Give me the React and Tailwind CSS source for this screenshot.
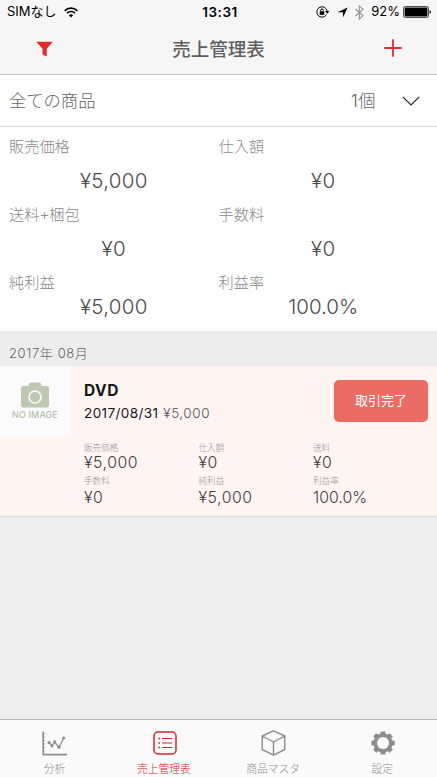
import React from "react";

function Wifi() {
  return (
    <svg width="14" height="11" viewBox="0 0 14 11" fill="none" stroke="#000" strokeWidth="1.7">
      <path d="M0.7 3.8a8.9 8.9 0 0 1 12.6 0" />
      <path d="M3 6.2a5.6 5.6 0 0 1 8 0" />
      <path d="M7 10.4 4.9 8.2a3 3 0 0 1 4.2 0Z" fill="#000" stroke="none" />
    </svg>
  );
}

function StatusBar() {
  return (
    <div className="grid h-6 grid-cols-[1fr_auto_1fr] items-center text-[13px] text-black">
      <div className="flex items-center gap-[7px] pl-[7px]">
        <span className="whitespace-nowrap">SIMなし</span>
        <Wifi />
      </div>
      <span className="ml-[3px] text-[13.5px] font-semibold tracking-[0.5px]">13:31</span>
      <div className="flex items-center justify-end pr-[6px]">
        <svg width="14" height="12" viewBox="0 0 14 12" fill="none" stroke="#000" strokeWidth="1">
          <path d="M10.4 8.8A5.2 5.2 0 1 1 11.2 5.4" />
          <path d="M9 5h4.4L11.2 7.7Z" fill="#000" stroke="none" />
          <rect x="3.7" y="5.3" width="4.6" height="3.6" fill="#000" stroke="none" />
          <path d="M4.7 5.5V4.3a1.3 1.3 0 0 1 2.6 0v1.2" />
        </svg>
        <svg className="ml-[7px]" width="11" height="11" viewBox="0 0 11 11">
          <path d="M10.6 0.4 6 10.6V5.2H0.4Z" fill="#000" />
        </svg>
        <svg className="ml-[7px]" width="9" height="15" viewBox="0 0 9 15" fill="none" stroke="#929292" strokeWidth="1.1">
          <path d="M0.5 4 8 10.8 4.3 14V1L8 4.2 0.5 11" />
        </svg>
        <span className="ml-[7px]">92%</span>
        <svg className="ml-[3px]" width="28" height="12" viewBox="0 0 28 12">
          <rect x="0.5" y="0.5" width="25" height="11" rx="1.8" fill="none" stroke="#222" strokeWidth="0.8" />
          <rect x="1.6" y="1.6" width="22.8" height="8.8" rx="0.8" fill="#000" />
          <path d="M26.6 4a2.2 2.2 0 0 1 0 4Z" fill="#000" />
        </svg>
      </div>
    </div>
  );
}

function Header() {
  return (
    <header className="h-[75px] border-b border-[#c6c6c6] bg-[#f6f6f6]">
      <StatusBar />
      <div className="grid h-[50px] grid-cols-[1fr_auto_1fr] items-center">
        <svg className="-mt-px ml-[36px]" width="17" height="16" viewBox="0 0 17 16">
          <path d="M0.2 0.7h16.6L10.8 7.8V15.5L6.5 13.6V7.8Z" fill="#e22d2b" />
        </svg>
        <h1 className="text-[18.5px] leading-6 font-medium text-[#5f5f5f]">売上管理表</h1>
        <svg className="-mt-[2px] mr-[35px] justify-self-end" width="18" height="18" viewBox="0 0 18 18" stroke="#e22d2b" strokeWidth="1.8">
          <path d="M9 0.3v17.4M0.3 9h17.4" />
        </svg>
      </div>
    </header>
  );
}

function Stat({ label, value, tight }) {
  return (
    <div>
      <div className="flex h-[38px] items-center text-[15.2px] font-light text-[#8a8a8a]">{label}</div>
      <div
        className={
          "flex h-[30px] items-center justify-center text-[20.5px] font-light text-[#4c4c4c] " +
          (value.startsWith("¥") ? "tracking-[0.3px] " : "") +
          (tight ? "-mt-[10px]" : "")
        }
      >
        {value}
      </div>
    </div>
  );
}

const totals = [
  ["販売価格", "¥5,000"],
  ["仕入額", "¥0"],
  ["送料+梱包", "¥0"],
  ["手数料", "¥0"],
  ["純利益", "¥5,000"],
  ["利益率", "100.0%"],
];

const details = [
  ["販売価格", "¥5,000"],
  ["仕入額", "¥0"],
  ["送料", "¥0"],
  ["手数料", "¥0"],
  ["純利益", "¥5,000"],
  ["利益率", "100.0%"],
];

function SaleItem() {
  return (
    <article className="flex h-[151px] border-b border-[#dcd8d8] bg-[#fef4f2]">
      <div className="flex h-[70px] w-[70px] flex-col items-center bg-[#fbfbfb] pt-[16px]">
        <svg width="28" height="26" viewBox="0 0 28 26">
          <path
            d="M2.5 4H7.5L8.2 1.6Q8.5 0.5 9.6 0.5H18.4Q19.5 0.5 19.8 1.6L20.5 4H25.5Q28 4 28 6.5V23Q28 25.5 25.5 25.5H2.5Q0 25.5 0 23V6.5Q0 4 2.5 4Z"
            fill="#bcc8b1"
          />
          <circle cx="14" cy="15" r="6" fill="none" stroke="#fbfbfb" strokeWidth="1.6" />
        </svg>
        <span className="mt-px text-[9px] leading-3 font-medium tracking-[0.1px] whitespace-nowrap text-[#b5c0aa]">NO IMAGE</span>
      </div>
      <div className="min-w-0 flex-1 pl-[14px]">
        <div className="flex h-[70px] justify-between pr-[9px]">
          <div className="pt-[14px]">
            <div className="text-[15.5px] leading-[22px] font-bold tracking-[0.5px] text-[#171717]">DVD</div>
            <div className="flex gap-[5px] text-[13.5px] leading-[23px] whitespace-nowrap">
              <span className="tracking-[0.4px] text-[#171717]">2017/08/31</span>
              <span className="font-light tracking-[0.55px] text-[#555]">¥5,000</span>
            </div>
          </div>
          <button className="mt-[14px] flex h-[42px] w-[94px] items-center justify-center rounded-[5px] bg-[#eb6c65] text-[13px] text-white">
            取引完了
          </button>
        </div>
        <div className="mt-[7px] grid grid-cols-[114.5px_114.5px_1fr] gap-y-[4px]">
          {details.map(([label, value], i) => (
            <div key={label}>
              <div className="text-[8.6px] leading-[11px] font-light text-[#999]">{label}</div>
              <div
                className={
                  "text-[15.8px] leading-[18px] font-light text-[#3c3c3c] " +
                  (value.startsWith("¥") ? "tracking-[0.55px] " : "") +
                  (i > 2 ? "mt-[2px]" : "")
                }
              >
                {value}
              </div>
            </div>
          ))}
        </div>
      </div>
    </article>
  );
}

function Tab({ label, active, children }) {
  return (
    <div
      className={
        "flex flex-col items-center pt-[10px] " + (active ? "text-[#d8262c]" : "text-[#8e8e8e]")
      }
    >
      <div className="flex h-[26px] items-center">{children}</div>
      <span className="mt-[6px] text-[10.8px] leading-4 font-light">{label}</span>
    </div>
  );
}

function TabBar() {
  return (
    <nav className="grid h-[58px] grid-cols-4 border-t border-[#bababa] bg-[#fafafa]">
      <Tab label="分析">
        <svg width="25" height="25" viewBox="0 0 25 25" fill="none" stroke="currentColor">
          <path d="M1.2 0.5V23.6H25" strokeWidth="1.6" />
          <path d="M1.5 2.5h2M1.5 6h2M1.5 9.5h2M1.5 13h2M1.5 16.5h2M1.5 20h2" strokeWidth="0.6" />
          <path d="M7 11.5 10 15 12.5 11 17 16.3 21.7 7.2" strokeWidth="1.3" />
          <g fill="currentColor" stroke="none">
            <circle cx="7" cy="11.5" r="1.6" />
            <circle cx="10" cy="15" r="1.4" />
            <circle cx="12.7" cy="10.8" r="1.5" />
            <circle cx="17" cy="16.2" r="1.6" />
            <circle cx="21.7" cy="7" r="1.6" />
          </g>
        </svg>
      </Tab>
      <Tab label="売上管理表" active>
        <svg className="ml-[2px]" width="24" height="24" viewBox="0 0 24 24" fill="none" stroke="currentColor">
          <rect x="1" y="1" width="22" height="22" rx="4" strokeWidth="1.5" />
          <path d="M9 7.5h10M9 12h10M9 16.5h10" strokeWidth="1.2" />
          <path d="M5.4 7.5h1.6M5.4 12h1.6M5.4 16.5h1.6" strokeWidth="1.4" />
        </svg>
      </Tab>
      <Tab label="商品マスタ">
        <svg width="25" height="26" viewBox="0 0 25 26" fill="none" stroke="currentColor" strokeWidth="1.4" strokeLinejoin="round">
          <path d="M12.5 0.9 23.8 6V19.5L12.5 25.1 1.2 19.5V6ZM1.2 6 12.5 12 23.8 6M12.5 12V25" />
        </svg>
      </Tab>
      <Tab label="設定">
        <svg className="ml-px" width="24" height="24" viewBox="0 0 24 24">
          <g fill="currentColor">
            <rect x="9.6" y="0.4" width="4.8" height="23.2" rx="0.6" />
            <rect x="9.6" y="0.4" width="4.8" height="23.2" rx="0.6" transform="rotate(45 12 12)" />
            <rect x="9.6" y="0.4" width="4.8" height="23.2" rx="0.6" transform="rotate(90 12 12)" />
            <rect x="9.6" y="0.4" width="4.8" height="23.2" rx="0.6" transform="rotate(135 12 12)" />
            <circle cx="12" cy="12" r="9.7" />
          </g>
          <circle cx="12" cy="12" r="6" fill="#fafafa" />
        </svg>
      </Tab>
    </nav>
  );
}

export default function App() {
  return (
    <div className="flex h-[777px] w-[437px] flex-col overflow-hidden bg-[#eeeeee] font-['Inter','Noto_Sans_CJK_JP',sans-serif]">
      <Header />
      <div className="flex h-[52px] items-center border-b border-[#dedede] bg-white pr-[17px] pl-[9px] text-[17.3px] font-light text-[#666]">
        <span className="flex-1">全ての商品</span>
        <span className="tracking-[0.5px]">1個</span>
        <svg className="ml-[26px]" width="18" height="10" viewBox="0 0 18 10" fill="none" stroke="#222" strokeWidth="1.2">
          <path d="M0.8 0.8 9 9 17.2 0.8" />
        </svg>
      </div>
      <section className="grid h-[204px] grid-cols-2 content-start bg-white px-[9px] pt-px">
        {totals.map(([label, value], i) => (
          <Stat key={label} label={label} value={value} tight={i > 3} />
        ))}
      </section>
      <div className="flex h-[35px] items-end bg-[#ededed] pb-[3px] pl-[9px] text-[13px] font-light text-[#666] tracking-[0.6px]">
        2017年 08月
      </div>
      <SaleItem />
      <div className="flex-1" />
      <TabBar />
    </div>
  );
}
